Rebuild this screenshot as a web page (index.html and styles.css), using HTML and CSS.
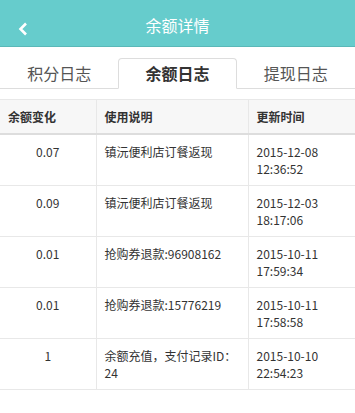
FILE: index.html
```html
<html>
	<head>
		<meta charset="utf-8">
		<link rel="stylesheet" href="styles.css">
	</head>
	<body>
		<header class="topbar">
			<a class="back">
				<svg width="10" height="14" viewBox="0 0 10 14">
					<path d="M8 1.5 L2.5 7 L8 12.5" fill="none" stroke="#fff" stroke-width="2.6"/>
				</svg>
			</a>
			<h1 class="title">余额详情</h1>
		</header>

		<ul class="tabs">
			<li>积分日志</li>
			<li class="active">余额日志</li>
			<li>提现日志</li>
		</ul>

		<table class="log">
			<colgroup>
				<col class="c1">
				<col class="c2">
				<col class="c3">
			</colgroup>
			<thead>
				<tr>
					<th>余额变化</th>
					<th>使用说明</th>
					<th>更新时间</th>
				</tr>
			</thead>
			<tbody>
				<tr>
					<td class="amount">0.07</td>
					<td>镇沅便利店订餐返现</td>
					<td>2015-12-08<br>12:36:52</td>
				</tr>
				<tr>
					<td class="amount">0.09</td>
					<td>镇沅便利店订餐返现</td>
					<td>2015-12-03<br>18:17:06</td>
				</tr>
				<tr>
					<td class="amount">0.01</td>
					<td>抢购券退款:96908162</td>
					<td>2015-10-11<br>17:59:34</td>
				</tr>
				<tr>
					<td class="amount">0.01</td>
					<td>抢购券退款:15776219</td>
					<td>2015-10-11<br>17:58:58</td>
				</tr>
				<tr>
					<td class="amount">1</td>
					<td>余额充值，支付记录ID：24</td>
					<td>2015-10-10<br>22:54:23</td>
				</tr>
			</tbody>
		</table>
	</body>
</html>
```

FILE: styles.css
```css
* {
	margin: 0;
	padding: 0;
	box-sizing: border-box;
}

body {
	font-family: "Noto Sans CJK SC", sans-serif;
	color: #333;
	background: #fff;
	width: 355px;
}

.topbar {
	height: 47px;
	background: #66cccc;
	border-bottom: 1px solid #5ab8b8;
	display: flex;
	align-items: center;
	justify-content: center;
	position: relative;
}

.topbar .back {
	position: absolute;
	left: 18px;
	top: 22px;
	display: flex;
}

.topbar .title {
	font-size: 16px;
	font-weight: normal;
	color: #fff;
	line-height: 20px;
	margin-top: 4px;
}

.tabs {
	list-style: none;
	display: flex;
	margin-top: 11px;
	border-bottom: 1px solid #ddd;
}

.tabs li {
	flex: 1;
	text-align: center;
	font-size: 16px;
	line-height: 20px;
	padding: 4px 0 5px;
	color: #555;
	border: 1px solid transparent;
	border-radius: 4px 4px 0 0;
	margin-bottom: -1px;
}

.tabs li.active {
	color: #333;
	font-weight: bold;
	border-color: #ddd #ddd transparent;
	background: #fff;
}

.log {
	width: 100%;
	margin-top: 10px;
	border-collapse: collapse;
	table-layout: fixed;
	font-size: 12px;
	line-height: 17px;
}

.log .c1 {
	width: 96px;
}

.log .c2 {
	width: 152px;
}

.log th,
.log td {
	padding: 8px;
	text-align: left;
	vertical-align: top;
	border-top: 1px solid #e8e8e8;
	border-left: 1px solid #e8e8e8;
}

.log th:first-child,
.log td:first-child {
	border-left: none;
}

.log th {
	background: #f7f7f7;
	font-weight: bold;
	border-bottom: 2px solid #ddd;
}

.log td.amount {
	text-align: center;
}

.log tbody tr:last-child td {
	border-bottom: 1px solid #e8e8e8;
}
```
